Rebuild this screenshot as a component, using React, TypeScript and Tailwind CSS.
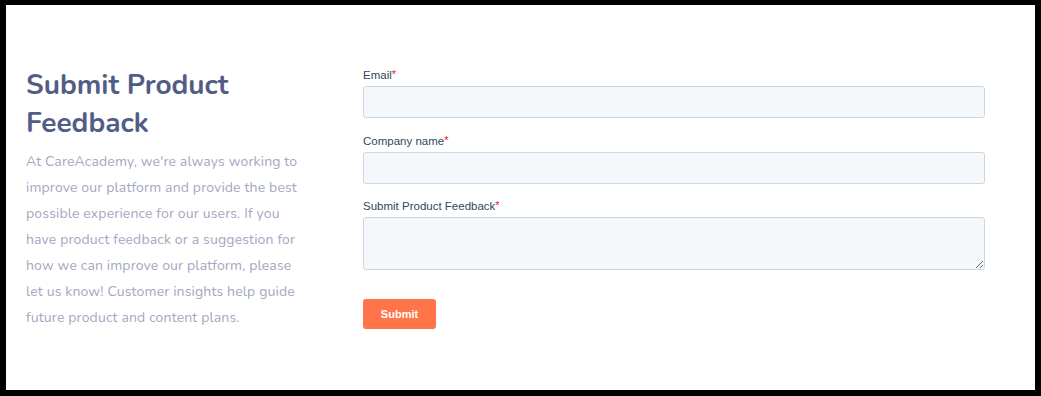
import React from 'react';

const paragraphLines = [
  "At CareAcademy, we're always working to",
  'improve our platform and provide the best',
  'possible experience for our users. If you',
  'have product feedback or a suggestion for',
  'how we can improve our platform, please',
  'let us know! Customer insights help guide',
  'future product and content plans.',
];

const Field: React.FC<{ label: string; multiline?: boolean; className?: string }> = ({
  label,
  multiline,
  className,
}) => (
  <div className={className}>
    <label className="block text-[11.5px] leading-[18px] text-[#33475b] mb-[2px]">
      {label}
      <span className="text-[#f0141b] text-[11px] align-top leading-[16px]">*</span>
    </label>
    {multiline ? (
      <textarea className="block w-full h-[53px] rounded-[3px] border border-[#cbd6e2] bg-[#f5f8fa] outline-none" />
    ) : (
      <input className="block w-full h-[32px] rounded-[3px] border border-[#cbd6e2] bg-[#f5f8fa] outline-none" />
    )}
  </div>
);

export default function App() {
  return (
    <div className="h-[396px] w-[1041px] bg-white border-black border-l-[6px] border-t-[5px] border-r-[6px] border-b-[6px]">
      <div className="flex pl-[20px] pt-[59px]">
        <div className="w-[337px] pt-[2px] font-['Nunito','Lato',sans-serif]">
          <h1 className="text-[28px] leading-[38px] font-bold text-[#525d86]">
            Submit Product
            <br />
            Feedback
          </h1>
          <p className="mt-[7px] text-[14px] leading-[26px] tracking-[0.15px] text-[#a3a8c0]">
            {paragraphLines.map((line, i) => (
              <React.Fragment key={i}>
                {line}
                {i < paragraphLines.length - 1 && <br />}
              </React.Fragment>
            ))}
          </p>
        </div>
        <form className="w-[622px] pt-[2px] font-['Liberation_Sans',Arial,sans-serif]">
          <Field label="Email" className="mb-[14px]" />
          <Field label="Company name" className="mb-[13px]" />
          <Field label="Submit Product Feedback" multiline className="mb-[29px]" />
          <button
            type="button"
            className="h-[30px] w-[73px] rounded-[3px] bg-[#ff7448] text-white text-[11px] font-bold"
          >
            Submit
          </button>
        </form>
      </div>
    </div>
  );
}
